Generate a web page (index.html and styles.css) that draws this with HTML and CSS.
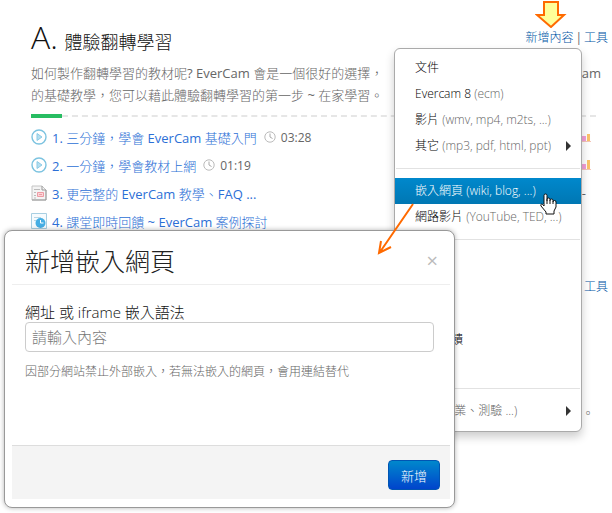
FILE: index.html
```
<!DOCTYPE html>
<html lang="zh-Hant">
<head>
  <meta charset="UTF-8" />
  <meta name="viewport" content="width=device-width, initial-scale=1.0"/>
  <title>體驗翻轉學習</title>
  <link rel="stylesheet" href="styles.css">
</head>
<body>
  <main class="course">
    <header class="section-head">
      <h1><span class="letter">A.</span> 體驗翻轉學習</h1>
      <nav class="tools"><a href="#">新增內容</a><span>|</span><a href="#">工具</a></nav>
    </header>

    <div class="desc">
      <p><span>如何製作翻轉學習的教材呢? EverCam 會是一個很好的選擇，</span><span>Cam</span></p>
      <p><span>的基礎教學，您可以藉此體驗翻轉學習的第一步 ~ 在家學習。</span></p>
    </div>

    <div class="progress"><div class="bar"></div></div>

    <ul class="lessons">
      <li>
        <svg class="icon" viewBox="0 0 16 16"><circle cx="8" cy="8" r="7" fill="#fff" stroke="#7cc3e0" stroke-width="1.4"/><path d="M6 4.5v7L11 8z" fill="#b5def0" stroke="#8ccbe6"/></svg>
        <a href="#">1. 三分鐘，學會 EverCam 基礎入門</a>
        <svg class="clock" viewBox="0 0 12 12"><circle cx="6" cy="6" r="5.2" fill="none" stroke="#bbb"/><path d="M6 2.5V6l2.5 1.5" fill="none" stroke="#aaa"/></svg>
        <span class="time">03:28</span>
        <svg class="stats" viewBox="0 0 9 10"><path d="M0 4h4v5H0z" fill="#f3a0d8"/><path d="M5 2h3v7H5z" fill="#fcc36a"/><path d="M0 9.5h9" stroke="#f5c6b8"/></svg>
      </li>
      <li>
        <svg class="icon" viewBox="0 0 16 16"><circle cx="8" cy="8" r="7" fill="#fff" stroke="#7cc3e0" stroke-width="1.4"/><path d="M6 4.5v7L11 8z" fill="#b5def0" stroke="#8ccbe6"/></svg>
        <a href="#">2. 一分鐘，學會教材上網</a>
        <svg class="clock" viewBox="0 0 12 12"><circle cx="6" cy="6" r="5.2" fill="none" stroke="#bbb"/><path d="M6 2.5V6l2.5 1.5" fill="none" stroke="#aaa"/></svg>
        <span class="time">01:19</span>
        <svg class="stats" viewBox="0 0 9 10"><path d="M0 4h4v5H0z" fill="#f3a0d8"/><path d="M5 0h3v9H5z" fill="#fcc36a"/><path d="M0 9.500h9" stroke="#f5c6b8"/></svg>
      </li>
      <li>
        <svg class="icon" viewBox="0 0 16 16"><path d="M1 1h10l4 4v10H1z" fill="#f4f4f4" stroke="#c4c4c4"/><path d="M11 1v4h4v10H1" fill="none" stroke="#999"/><path d="M3 4.500h6M3 7.500h2M3 10.500h2M3 13h2" stroke="#bbb"/><path d="M6.500 7.500h6v4h-6zM8 9.500h3" fill="#fbd5d8" stroke="#ee9ba4"/></svg>
        <a href="#">3. 更完整的 EverCam 教學、FAQ ...</a>
        <span class="dash">-</span>
      </li>
      <li>
        <svg class="icon" viewBox="0 0 16 16"><path d="M.5.500h15v15H.500z" fill="#f6fbfe" stroke="#a8cfe2"/><path d="M3 4.500h7M3 7.500h2" stroke="#b9d6e4"/><circle cx="9.500" cy="10" r="5" fill="#45aee4"/><path d="M9.500 7v3h3" fill="none" stroke="#fff"/></svg>
        <a href="#">4. 課堂即時回饋 ~ EverCam 案例探討</a>
      </li>
    </ul>

    <nav class="tools next"><a href="#">工具</a></nav>
    <p class="tail">。</p>
  </main>

  <ul class="menu">
    <li><a href="#">文件</a></li>
    <li><a href="#">Evercam 8 <small>(ecm)</small></a></li>
    <li><a href="#">影片 <small>(wmv, mp4, m2ts, ...)</small></a></li>
    <li><a class="more" href="#"><span>其它 <small>(mp3, pdf, html, ppt)</small></span></a></li>
    <li class="divider"></li>
    <li><a class="active" href="#">嵌入網頁 <small>(wiki, blog, ...)</small></a></li>
    <li><a href="#">網路影片 <small>(YouTube, TED, ...)</small></a></li>
    <li class="divider"></li>
    <li class="group"><a href="#">問卷回饋</a></li>
    <li class="divider"></li>
    <li><a class="more" href="#"><span>活動<small>(作業、測驗 ...)</small></span></a></li>
  </ul>

  <form class="modal">
    <header class="modal-head">
      <h2>新增嵌入網頁</h2>
      <button type="button" class="close" aria-label="關閉">×</button>
    </header>
    <div class="modal-body">
      <label for="url">網址 或 iframe 嵌入語法</label>
      <input type="text" id="url" placeholder="請輸入內容">
      <p>因部分網站禁止外部嵌入，若無法嵌入的網頁，會用連結替代</p>
    </div>
    <footer class="modal-foot">
      <button type="button" class="btn">新增</button>
    </footer>
  </form>

  <!-- pointers on top of the page -->
  <svg class="down-arrow" viewBox="0 0 32 28"><path d="M9 2h14v13h6L16 27 2 15h7z" fill="#ff9" stroke="#ff6a00" stroke-width="2"/></svg>
  <svg class="line-arrow" viewBox="0 0 38 54"><path d="M36 1L3 49M4 38L2 50l12-6" fill="none" stroke="#ff6a00" stroke-width="2"/></svg>
  <svg class="hand" viewBox="0 0 18 22"><path d="M5 13V2.500a1.500 1.500 0 0 1 3 0V8V6.500a1.500 1.500 0 0 1 3 0V8V7.500a1.500 1.500 0 0 1 3 0V9a1.500 1.500 0 0 1 3 0v5l-2 4v3H7v-2l-5-6c-1-2 1-3 3 0zM8 8v3M11 8v3M14 9v2" fill="#fff" stroke="#111"/></svg>
</body>
</html>
```
FILE: styles.css
```
* {
  box-sizing: border-box;
}

body {
  position: relative;
  margin: 0;
  min-height: 513px;
  background: #fff;
  color: #666;
  font-family: "Open Sans", "Noto Sans CJK TC Light", "Noto Sans CJK TC", sans-serif;
  font-size: 13px;
}

h1, h2, p, ul {
  margin: 0;
  padding: 0;
}

h1, h2 {
  font-weight: 300;
}

ul {
  list-style: none;
}

a {
  text-decoration: none;
}

button, input {
  font-family: inherit;
}

.course {
  padding: 20px 4px 0 31px;
}

.section-head {
  display: flex;
  justify-content: space-between;
  align-items: flex-end;
  height: 42px;
}

h1 {
  color: #111;
  font-size: 18px;
  line-height: 40px;
}

.letter {
  margin-right: 2px;
  font-size: 32px;
}

.tools {
  display: flex;
  gap: 2px;
  align-self: flex-start;
  padding-top: 9px;
  font-size: 12px;
  line-height: 18px;
}

.tools a {
  color: #0055a5;
}

.desc {
  padding-right: 7px;
  line-height: 22px;
}

.desc p {
  display: flex;
  justify-content: space-between;
}

.progress {
  display: flex;
  align-items: center;
  height: 4px;
  margin: 8px 12px 0 0;
}

.progress::after {
  content: "";
  flex: 1;
  border-top: 2px dashed #e6e6e6;
}

.bar {
  width: 31px;
  height: 4px;
  background: #28bd62;
}

.lessons {
  margin-top: 5px;
}

.lessons li {
  display: flex;
  align-items: center;
  height: 28px;
  gap: 5px;
  padding-right: 17px;
}

.lessons a {
  color: #2c6fd6;
}

.icon {
  width: 16px;
  height: 16px;
}

.clock {
  width: 12px;
  height: 12px;
  margin-left: 2px;
}

.time {
  font-size: 12px;
}

.stats {
  width: 9px;
  height: 10px;
  margin-left: auto;
}

.dash {
  margin: 0 5px 0 auto;
}

.next {
  justify-content: flex-end;
  margin-top: 34px;
}

.tail {
  margin-top: 108px;
  padding-right: 14px;
  font-size: 12px;
  text-align: right;
}

.menu {
  position: absolute;
  top: 48px;
  right: 30px;
  width: 188px;
  padding: 6px 0 7px;
  background: #fff;
  border: 1px solid #aaa;
  border-radius: 6px;
  box-shadow: 0 5px 10px rgba(0, 0, 0, 0.2);
  font-size: 12px;
  font-weight: 300;
}

.menu a {
  display: block;
  padding: 0 20px;
  line-height: 26px;
  color: #000;
  white-space: nowrap;
}

.menu small {
  font-size: 12px;
  color: #666;
}

.menu a.active {
  background: linear-gradient(#0088cc, #0077b3);
}

.menu a.active, .menu a.active small {
  color: #fff;
}

.menu a.more {
  display: flex;
  align-items: center;
  padding-right: 10px;
}

.more::after {
  content: "";
  margin-left: auto;
  border: 5px solid transparent;
  border-left-color: #333;
  border-right: 0;
}

.divider {
  height: 1px;
  margin: 9px 1px;
  background: #e2e2e2;
}

.group {
  padding: 78px 0 26px;
}

.modal {
  position: absolute;
  top: 230px;
  left: 4px;
  width: 451px;
  padding: 6px 4px 8px 7px;
  background: #fff;
  border: 1px solid #999;
  border-radius: 8px;
  box-shadow: 0 0 5px rgba(0, 0, 0, 0.3);
}

.modal-head {
  display: flex;
  justify-content: space-between;
  align-items: center;
  height: 48px;
  padding: 0 12px 0 13px;
  border-bottom: 1px solid #eee;
}

h2 {
  color: #222;
  font-size: 25px;
  line-height: 46px;
}

.close {
  padding: 0;
  background: none;
  border: 0;
  color: #bbb;
  font-size: 20px;
  line-height: 20px;
}

.modal-body {
  height: 160px;
  padding: 17px 16px 0 13px;
}

label {
  display: block;
  color: #111;
  font-size: 15px;
  font-weight: 300;
  line-height: 20px;
}

input {
  display: block;
  width: 100%;
  height: 30px;
  padding: 0 6px;
  border: 1px solid #ccc;
  border-radius: 4px;
  font-size: 15px;
}

input::placeholder {
  color: #777;
}

.modal-body p {
  margin-top: 10px;
  color: #666;
  font-size: 12px;
  line-height: 20px;
}

.modal-foot {
  display: flex;
  justify-content: flex-end;
  padding: 14px 10px 9px;
  background: #f4f4f4;
  border-top: 1px solid #ddd;
}

.btn {
  width: 52px;
  height: 30px;
  padding: 0;
  background: linear-gradient(#0088cc, #0044cc);
  border: 1px solid #0055b3;
  border-radius: 4px;
  color: #fff;
  font-size: 13px;
}

.down-arrow {
  position: absolute;
  top: 0;
  right: 45px;
  width: 32px;
  height: 28px;
}

.line-arrow {
  position: absolute;
  top: 203px;
  left: 377px;
  width: 38px;
  height: 54px;
}

.hand {
  position: absolute;
  top: 193px;
  left: 539px;
  width: 18px;
  height: 22px;
}
```
